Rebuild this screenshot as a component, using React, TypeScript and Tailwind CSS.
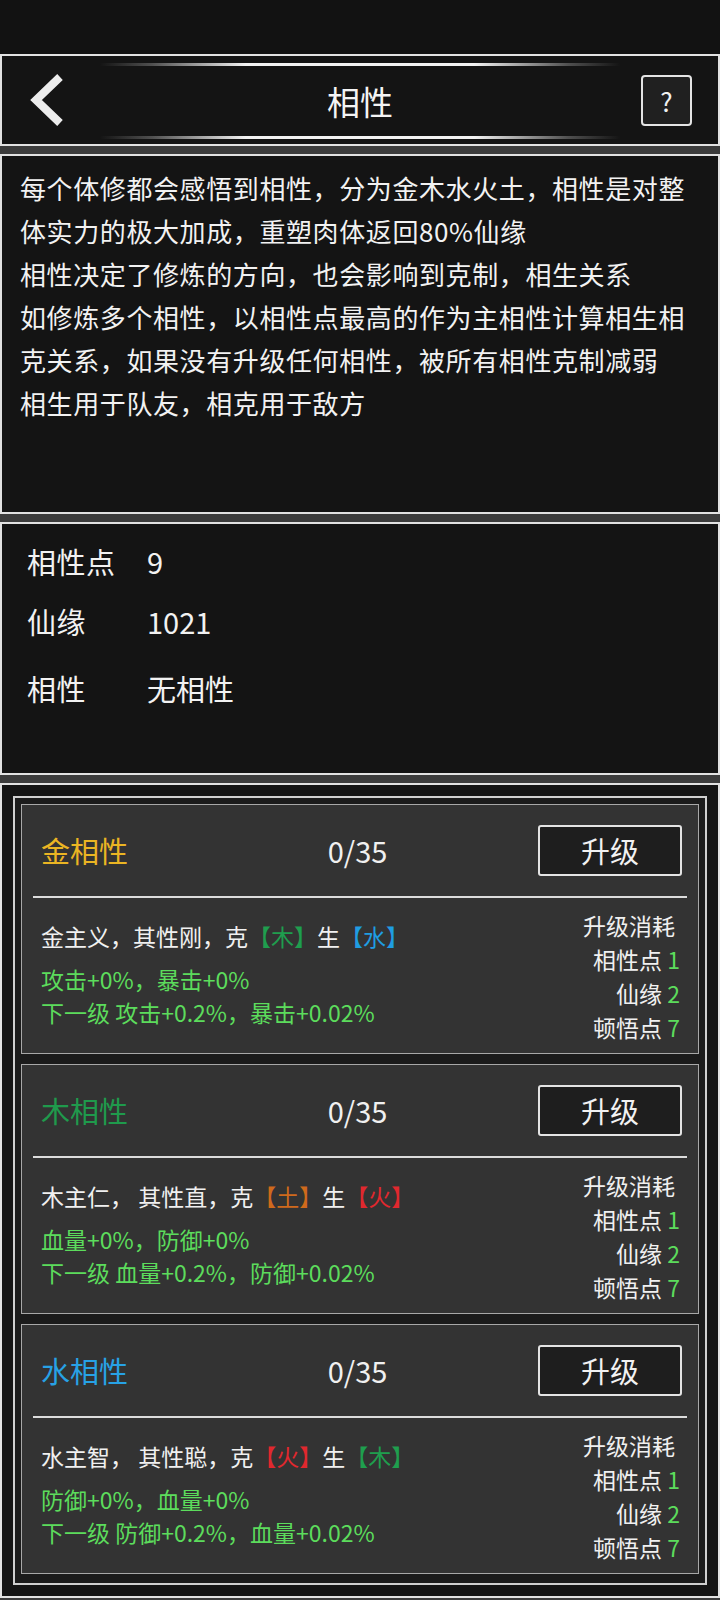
import React from "react";

const FONT = { fontFamily: '"Noto Sans CJK SC", "Noto Sans", sans-serif' };

type Seg = { t: string; c?: string };

type CardData = {
  name: string;
  nameColor: string;
  desc: Seg[];
  cur: string;
  next: string;
};

const cards: CardData[] = [
  {
    name: "金相性",
    nameColor: "#ebb523",
    desc: [
      { t: "金主义，其性刚，克" },
      { t: "【木】", c: "#1f9e4e" },
      { t: "生" },
      { t: "【水】", c: "#1f9de2" },
    ],
    cur: "攻击+0%，暴击+0%",
    next: "下一级 攻击+0.2%，暴击+0.02%",
  },
  {
    name: "木相性",
    nameColor: "#1f9a4c",
    desc: [
      { t: "木主仁， 其性直，克" },
      { t: "【土】", c: "#cf6a1c" },
      { t: "生" },
      { t: "【火】", c: "#e0282e" },
    ],
    cur: "血量+0%，防御+0%",
    next: "下一级 血量+0.2%，防御+0.02%",
  },
  {
    name: "水相性",
    nameColor: "#27a2e6",
    desc: [
      { t: "水主智， 其性聪，克" },
      { t: "【火】", c: "#e0282e" },
      { t: "生" },
      { t: "【木】", c: "#1f9e4e" },
    ],
    cur: "防御+0%，血量+0%",
    next: "下一级 防御+0.2%，血量+0.02%",
  },
];

function GlowLine() {
  return (
    <div
      className="h-[3px] w-full"
      style={{
        background:
          "linear-gradient(to right, rgba(255,255,255,0) 0%, rgba(120,120,120,0.6) 10%, #f2f2f2 28%, #f2f2f2 72%, rgba(120,120,120,0.6) 90%, rgba(255,255,255,0) 100%)",
      }}
    />
  );
}

function Card({ d }: { d: CardData }) {
  return (
    <div className="h-[250px] border border-[#a8a8a8] bg-[#333333] flex flex-col">
      <div className="h-[91px] flex items-center pl-[19px] pr-[16px]">
        <div className="w-[160px] text-[29px]" style={{ color: d.nameColor }}>
          {d.name}
        </div>
        <div className="flex-1 text-center text-[29px] text-[#f0f0f0] pr-[24px]">0/35</div>
        <div className="w-[144px] h-[51px] border-2 border-[#e4e4e4] rounded-[3px] bg-[#1e1e1e] flex items-center justify-center text-[29px] text-[#f2f2f2]">
          升级
        </div>
      </div>
      <div className="mx-[11px] h-[2px] bg-[#dcdcdc]" />
      <div className="flex justify-between pl-[19px] pr-[18px]">
        <div className="pt-[22px] text-[23px] leading-[33px]">
          <div className="text-[#f0f0f0] mb-[10px] whitespace-pre">
            {d.desc.map((s, i) => (
              <span key={i} style={s.c ? { color: s.c } : undefined}>
                {s.t}
              </span>
            ))}
          </div>
          <div className="text-[#5cdc5c]">{d.cur}</div>
          <div className="text-[#5cdc5c]">{d.next}</div>
        </div>
        <div className="pt-[10px] text-[23px] leading-[34px] text-right text-[#f0f0f0]">
          <div className="pr-[5px]">升级消耗</div>
          <div>
            相性点 <span className="text-[#5cdc5c]">1</span>
          </div>
          <div>
            仙缘 <span className="text-[#5cdc5c]">2</span>
          </div>
          <div>
            顿悟点 <span className="text-[#5cdc5c]">7</span>
          </div>
        </div>
      </div>
    </div>
  );
}

export default function App() {
  const desc = [
    "每个体修都会感悟到相性，分为金木水火土，相性是对整",
    "体实力的极大加成，重塑肉体返回80%仙缘",
    "相性决定了修炼的方向，也会影响到克制，相生关系",
    "如修炼多个相性，以相性点最高的作为主相性计算相生相",
    "克关系，如果没有升级任何相性，被所有相性克制减弱",
    "相生用于队友，相克用于敌方",
  ];
  return (
    <div className="w-[720px] h-[1600px] bg-[#3c3c3c] flex flex-col overflow-hidden" style={FONT}>
      <div className="h-[54px] bg-[#121212] shrink-0" />
      {/* Header */}
      <div className="h-[92px] shrink-0 border-2 border-[#e2e2e2] bg-[#141414] flex items-stretch">
        <div className="w-[98px] flex items-center pl-[24px]">
          <svg width="42" height="56" viewBox="0 0 42 56">
            <path d="M34 5 L10 28 L34 51" fill="none" stroke="#ececec" strokeWidth="8" strokeLinecap="butt" strokeLinejoin="miter" />
          </svg>
        </div>
        <div className="flex-1 flex flex-col justify-between pt-[7px] pb-[5px]">
          <GlowLine />
          <div className="text-center text-[33px] text-[#f4f4f4] leading-none">相性</div>
          <GlowLine />
        </div>
        <div className="w-[98px] flex items-center pl-[21px]">
          <div className="w-[51px] h-[51px] border-2 border-[#e4e4e4] rounded-[4px] bg-[#202020] flex items-center justify-center text-[26px] text-[#f0f0f0]">
            ?
          </div>
        </div>
      </div>
      <div className="h-[8px] shrink-0" />
      {/* Description */}
      <div className="h-[360px] shrink-0 border-2 border-[#e2e2e2] bg-[#141414] pl-[18px] pt-[10px]">
        {desc.map((l, i) => (
          <div key={i} className="text-[26px] leading-[43px] tracking-[0.6px] text-[#f2f2f2] whitespace-nowrap">
            {l}
          </div>
        ))}
      </div>
      <div className="h-[8px] shrink-0" />
      {/* Stats */}
      <div className="h-[253px] shrink-0 border-2 border-[#e2e2e2] bg-[#141414] pl-[25px] pt-[18px] text-[29px] text-[#f2f2f2]">
        <div className="flex h-[40px] items-center">
          <div className="w-[120px] tracking-[0.5px]">相性点</div>
          <div>9</div>
        </div>
        <div className="flex h-[40px] items-center mt-[20px]">
          <div className="w-[120px] tracking-[0.5px]">仙缘</div>
          <div>1021</div>
        </div>
        <div className="flex h-[40px] items-center mt-[27px]">
          <div className="w-[120px] tracking-[0.5px]">相性</div>
          <div>无相性</div>
        </div>
      </div>
      <div className="h-[8px] shrink-0" />
      {/* Cards */}
      <div className="h-[815px] shrink-0 border-2 border-[#e2e2e2] bg-[#141414] pt-[11px] pl-[11px] pr-[11px]">
        <div className="border-2 border-[#cfcfcf] bg-[#1b1b1b] pt-[6px] pb-[9px] px-[6px] flex flex-col gap-[10px]">
          {cards.map((c) => (
            <Card key={c.name} d={c} />
          ))}
        </div>
      </div>
    </div>
  );
}
